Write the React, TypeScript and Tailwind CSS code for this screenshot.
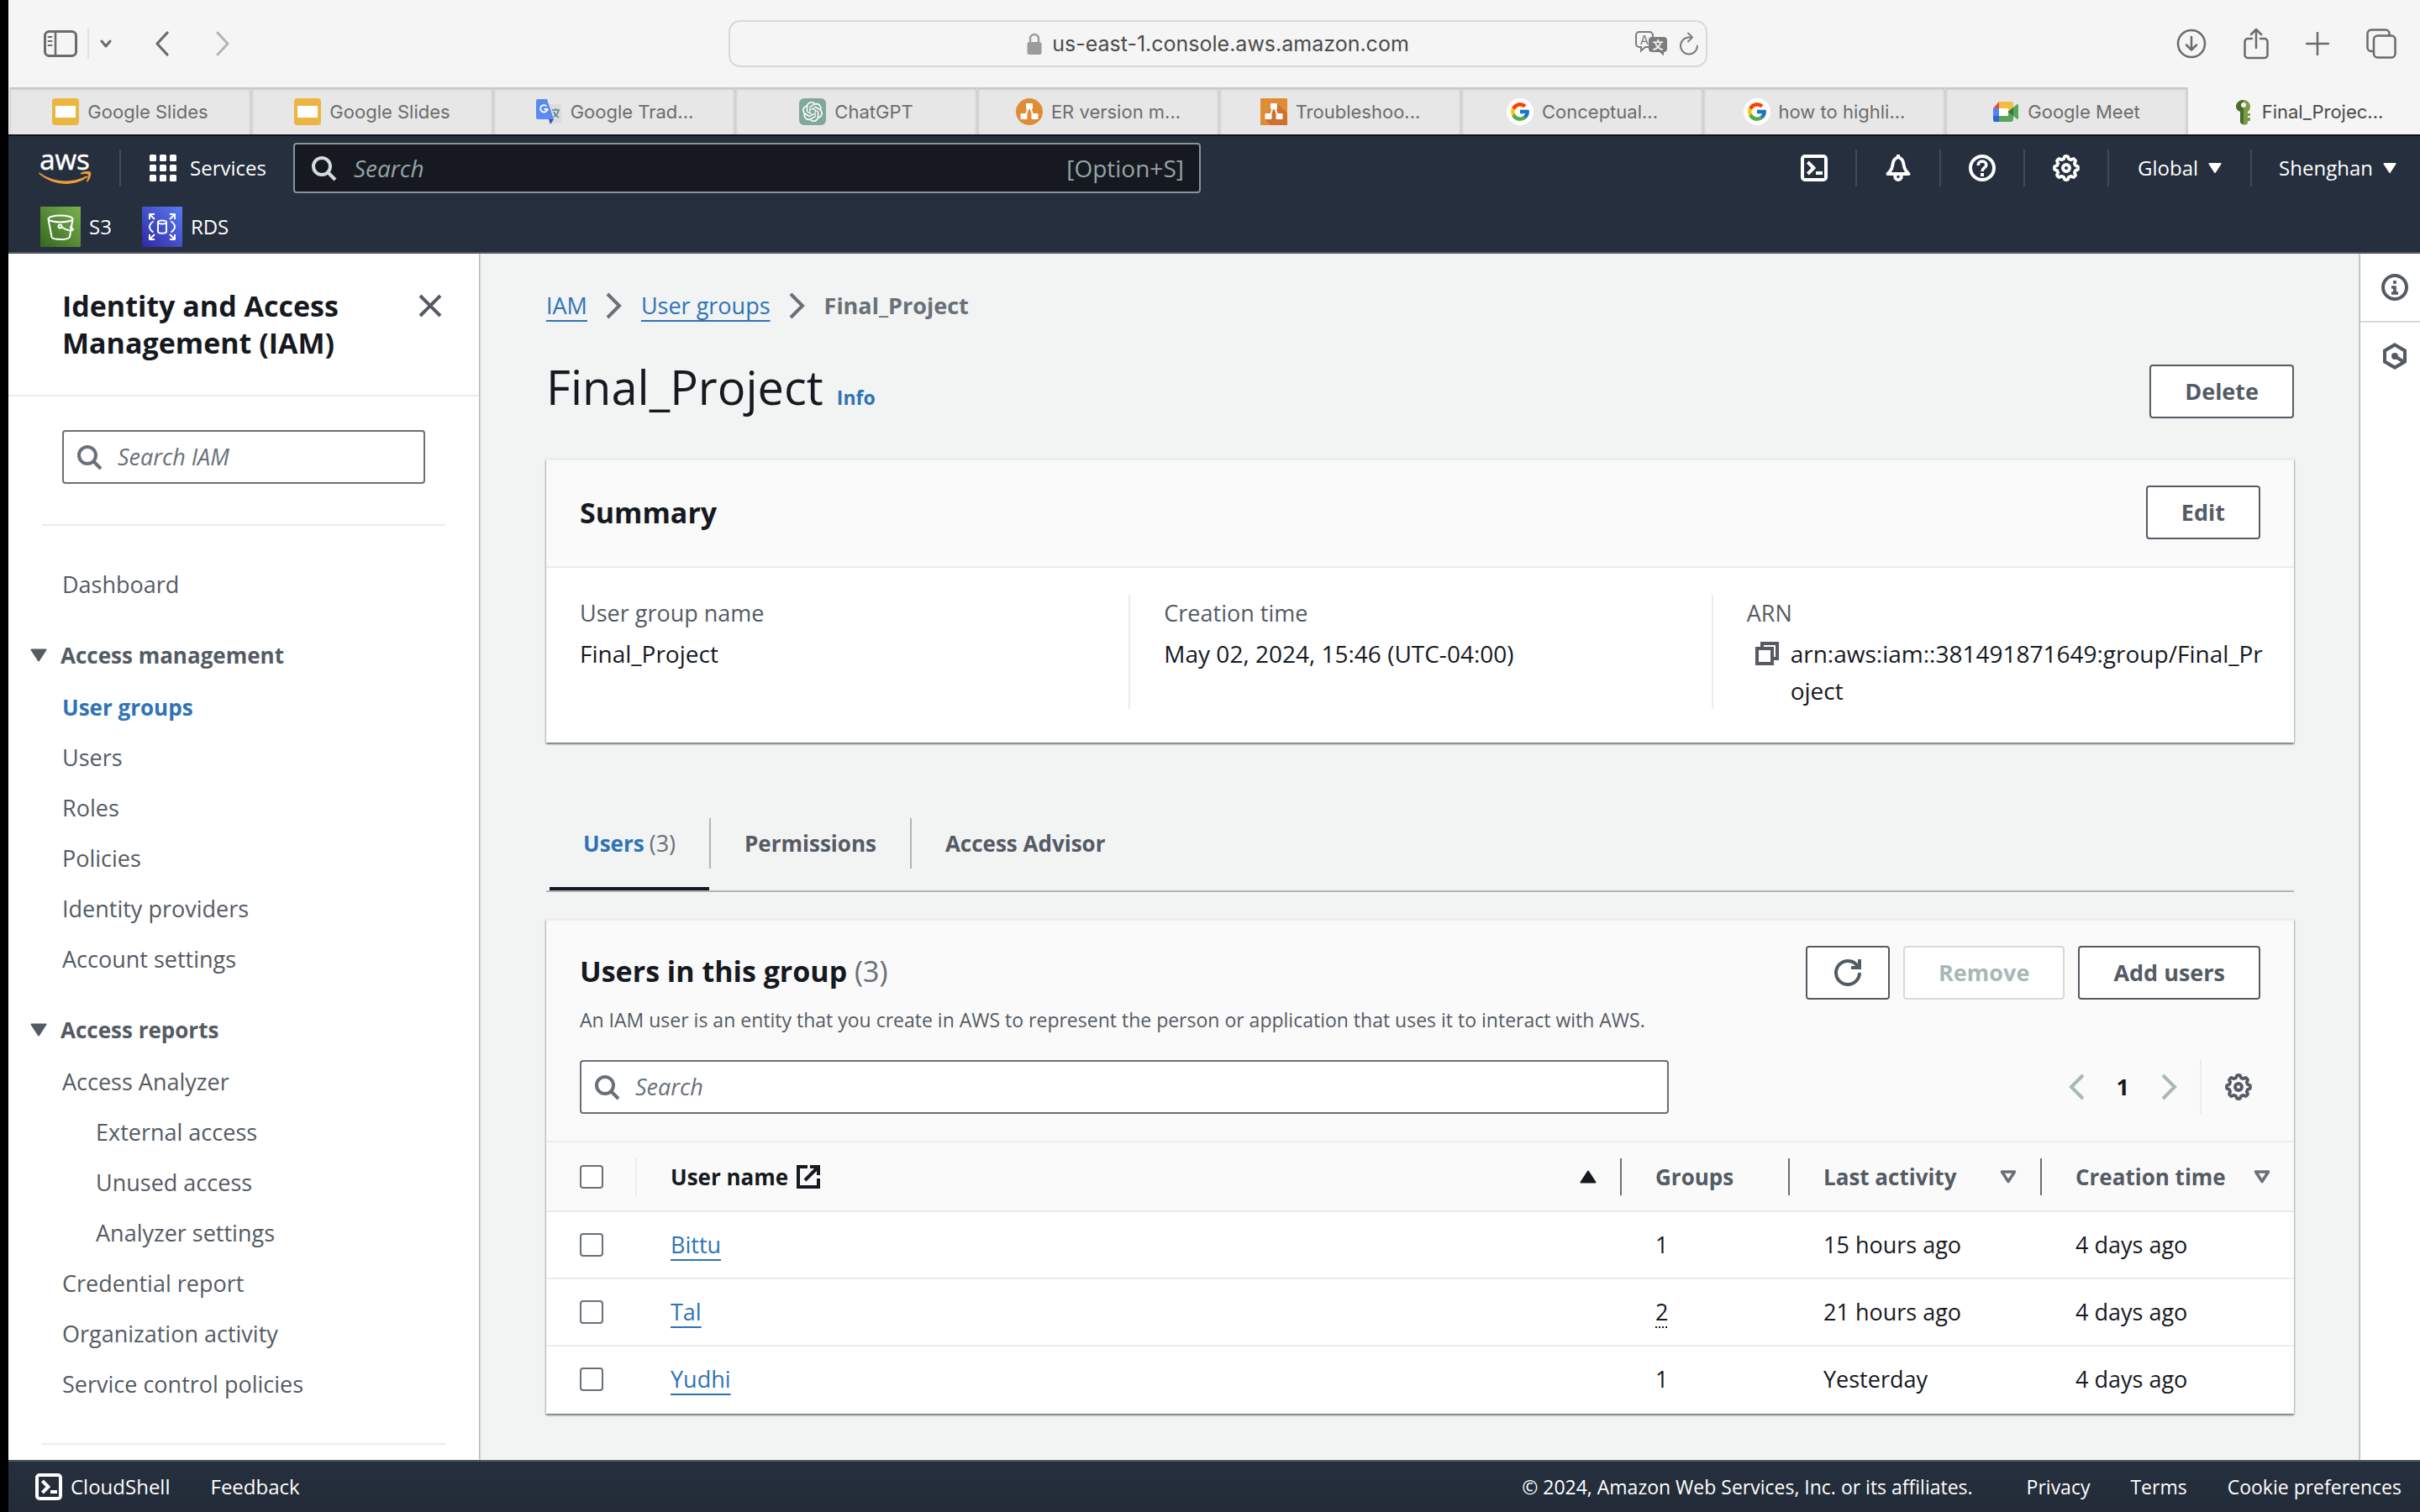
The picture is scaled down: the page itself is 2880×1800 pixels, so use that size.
import React from "react";
import { FcGoogle } from "react-icons/fc";
import { SiOpenai } from "react-icons/si";

type IconProps = { className?: string };

/* ---------- browser chrome icons ---------- */

const SidebarIcon = () => (
  <svg width="40" height="32" viewBox="0 0 40 32" fill="none" stroke="currentColor" strokeWidth="3">
    <rect x="1.5" y="1.5" width="37" height="29" rx="5" />
    <path d="M14 2v28" strokeWidth="2.5" />
    <path d="M5.500 8h4M5.500 13h4M5.500 18h4" strokeWidth="2" strokeLinecap="round" />
  </svg>
);

const Chevron = ({ d, w, h, sw, vb }: { d: string; w: number; h: number; sw: number; vb: string }) => (
  <svg width={w} height={h} viewBox={vb} fill="none" stroke="currentColor" strokeWidth={sw} strokeLinecap="round" strokeLinejoin="round">
    <path d={d} />
  </svg>
);

const LockIcon = () => (
  <svg width="18" height="26" viewBox="0 0 18 26" className="text-[#9b9b9b]">
    <rect x="0.500" y="11" width="17" height="15" rx="2.500" fill="currentColor" />
    <path d="M4 12V7a5 5 0 0 1 10 0v5" fill="none" stroke="currentColor" strokeWidth="2.400" />
  </svg>
);

const TranslateIcon = () => (
  <svg width="40" height="30" viewBox="0 0 40 30" className="text-[#7d7d7d]">
    <path d="M16 19h-4l-5 4.500V19H5a4 4 0 0 1-4-4V5a4 4 0 0 1 4-4h12a4 4 0 0 1 4 4v2" fill="none" stroke="currentColor" strokeWidth="2" />
    <text x="11" y="16" fontSize="15" textAnchor="middle" fill="currentColor" fontFamily="Inter, sans-serif">A</text>
    <path d="M20 7h14a4 4 0 0 1 4 4v10a4 4 0 0 1-4 4v4.500L29 25h-9a4 4 0 0 1-4-4V11a4 4 0 0 1 4-4z" fill="currentColor" />
    <text x="27" y="21" fontSize="13" fontWeight="700" textAnchor="middle" fill="#f5f5f5" fontFamily="'Noto Sans CJK SC', sans-serif">文</text>
  </svg>
);

const ReloadIcon = () => (
  <svg width="24" height="28" viewBox="0 0 24 28" fill="none" stroke="#7d7d7d" strokeWidth="2" strokeLinecap="round" strokeLinejoin="round">
    <path d="M22 16.500A10 10 0 1 1 12 6.500h3.500" />
    <path d="M11 1.500l5 5-5 5" />
  </svg>
);

const DownloadIcon = () => (
  <svg width="36" height="36" viewBox="0 0 36 36" fill="none" stroke="currentColor" strokeWidth="2.500" strokeLinecap="round" strokeLinejoin="round">
    <circle cx="18" cy="18" r="16" />
    <path d="M18 10v15M12 19.500l6 6 6-6" />
  </svg>
);

const ShareIcon = () => (
  <svg width="30" height="38" viewBox="0 0 30 38" fill="none" stroke="currentColor" strokeWidth="2.500" strokeLinecap="round" strokeLinejoin="round">
    <path d="M10 13H5a3.500 3.500 0 0 0-3.500 3.500v16A3.500 3.500 0 0 0 5 36h20a3.500 3.500 0 0 0 3.500-3.500v-16A3.500 3.500 0 0 0 25 13h-5" />
    <path d="M15 24V2M9 8l6-6 6 6" />
  </svg>
);

const PlusIcon = () => (
  <svg width="28" height="28" viewBox="0 0 28 28" stroke="currentColor" strokeWidth="2.500" strokeLinecap="round">
    <path d="M14 1v26M1 14h26" />
  </svg>
);

const TabsIcon = () => (
  <svg width="36" height="36" viewBox="0 0 36 36" fill="none" stroke="currentColor" strokeWidth="2.500">
    <path d="M8 27H6a4.500 4.500 0 0 1-4.500-4.500V6A4.500 4.500 0 0 1 6 1.500h17A4.500 4.500 0 0 1 27.500 6v2" />
    <rect x="9" y="8.500" width="25.500" height="26" rx="4.500" />
  </svg>
);

/* ---------- favicons ---------- */

const SlidesFav = () => (
  <svg width="32" height="32" viewBox="0 0 32 32">
    <rect width="32" height="32" rx="4" fill="#eab541" />
    <rect x="4" y="9" width="24" height="14" fill="#fff" />
  </svg>
);

const TranslateFav = () => (
  <svg width="32" height="32" viewBox="0 0 32 32">
    <path d="M14 7h15a2 2 0 0 1 2 2v19a2 2 0 0 1-2 2H18z" fill="#dcdcdc" />
    <path d="M16 25l6 0-4 6z" fill="#3452c4" />
    <path d="M3 1h11l8 24H3a2 2 0 0 1-2-2V3a2 2 0 0 1 2-2z" fill="#5a8bf0" />
    <path d="M13.500 9.500A4.200 4.200 0 1 0 14.500 13h-4" fill="none" stroke="#fff" strokeWidth="1.800" />
    <path d="M20 14h9M24.500 12v2M28 14c-1 4-4 7-6 8M22 16c1 3 3 5 6 7" stroke="#5f8391" strokeWidth="1.500" fill="none" />
  </svg>
);

const ChatFav = () => (
  <span className="flex size-8 items-center justify-center rounded-md bg-[#80a89b] text-2xl text-white">
    <SiOpenai />
  </span>
);

const DrawioShape = () => (
  <>
    <path d="M16 8l-5 14M16 8l5 14" stroke="#fff" strokeWidth="2" />
    <rect x="12" y="6" width="8" height="7" rx="1" fill="#fff" />
    <rect x="5.500" y="18" width="8" height="7" rx="1" fill="#fff" />
    <rect x="18.500" y="18" width="8" height="7" rx="1" fill="#fff" />
  </>
);

const DrawioRound = () => (
  <svg width="32" height="32" viewBox="0 0 32 32">
    <circle cx="16" cy="16" r="16" fill="#e08c35" />
    <DrawioShape />
  </svg>
);

const DrawioSquare = () => (
  <svg width="32" height="32" viewBox="0 0 32 32">
    <rect width="32" height="32" rx="1" fill="#e08c35" />
    <path d="M20 6l12 12v14H12l-6-7 6-12z" fill="#d0702c" />
    <DrawioShape />
  </svg>
);

const GoogleFav = () => (
  <span className="flex size-8 items-center justify-center rounded-full bg-white text-[26px]">
    <FcGoogle />
  </span>
);

const MeetFav = () => (
  <svg width="32" height="32" viewBox="0 0 32 32">
    <path d="M8 4v8H1z" fill="#dc4f3e" />
    <path d="M8 4h14a3 3 0 0 1 3 3v8l-6 3v-6H8z" fill="#f2bd42" />
    <path d="M1 12h7v9H1z" fill="#5383ec" />
    <path d="M1 21h7v7H3a2 2 0 0 1-2-2z" fill="#2f66d0" />
    <path d="M8 21h11v-6l6 2v8a3 3 0 0 1-3 3H8z" fill="#58a65c" />
    <path d="M8 12h11v9H8z" fill="#fff" />
    <path d="M19 16l10-8.500c1-.8 2-.3 2 1v15c0 1.300-1 1.800-2 1z" fill="#58a65c" />
    <path d="M19 16l6-5v10z" fill="#35753f" />
  </svg>
);

const KeyFav = () => (
  <svg width="24" height="32" viewBox="0 0 24 32">
    <path d="M12 2a8 8 0 0 1 8 8c0 2.500-1 4.500-3 6v2h3v3h-3v2h3v4h-3v3l-3 2-4-3V16c-3-1-5-3.500-5-6a8 8 0 0 1 7-8z" fill="#7b9c46" />
    <path d="M12 2C7 2 3 5.500 3 10c0 3 2 5 5 6v13l4 3V12" fill="#4c6b2b" />
    <circle cx="12" cy="8" r="3" fill="#f5f5f5" />
  </svg>
);

/* ---------- console icons, on a 16-unit grid ---------- */

const Svg = ({ className = "size-8", children }: IconProps & { children: React.ReactNode }) => (
  <svg viewBox="0 0 16 16" className={"shrink-0 " + className} fill="none" stroke="currentColor" strokeWidth="2">
    {children}
  </svg>
);

const SearchIcon = ({ className }: IconProps) => (
  <Svg className={className}>
    <circle cx="7" cy="7" r="5" />
    <path d="M10.500 10.500L15 15" />
  </Svg>
);

const gearPath = Array.from({ length: 96 }, (_, i) => {
  const a = (i / 96) * Math.PI * 2;
  const wave = Math.max(-1, Math.min(1, Math.cos(8 * a) * 1.8));
  const r = 6.300 + 0.700 * wave;
  return `${i ? "L" : "M"}${(8 + r * Math.sin(a)).toFixed(2)} ${(8 - r * Math.cos(a)).toFixed(2)}`;
}).join("") + "Z";

const GearIcon = ({ className }: IconProps) => (
  <Svg className={className}>
    <path d={gearPath} strokeLinejoin="round" strokeWidth="1.900" />
    <circle cx="8" cy="8" r="2" />
  </Svg>
);

const TerminalIcon = () => (
  <Svg>
    <rect x="1" y="1" width="14" height="14" rx="1.500" />
    <path d="M4.200 4.500L7.700 8l-3.500 3.500" />
    <path d="M9 11h4" />
  </Svg>
);

const BellIcon = () => (
  <Svg>
    <path d="M8 1.500c-1.800.5-3 2-3.300 4.500-.3 2.500-1.200 4-3 5.500h12.600c-1.800-1.500-2.700-3-3-5.500C11 3.500 9.800 2 8 1.500z" strokeLinejoin="round" strokeWidth="1.900" />
    <path d="M6.200 12v1.200a1.800 1.800 0 0 0 3.600 0V12" />
    <path d="M8 0v2" />
  </Svg>
);

const HelpIcon = () => (
  <Svg>
    <circle cx="8" cy="8" r="7" />
    <path d="M5.600 6.500C5.600 5 6.600 4 8 4s2.400.9 2.400 2.200C10.400 7.800 8 8 8 10" strokeWidth="1.800" />
    <path d="M8 11v2" />
  </Svg>
);

const InfoIcon = () => (
  <Svg>
    <circle cx="8" cy="8" r="7" />
    <path d="M6 8h2v3.500M6 11.500h4M8 4v2" strokeWidth="1.800" />
  </Svg>
);

const HexIcon = () => (
  <Svg>
    <path d="M8 1.200l6 3.500v6.600l-6 3.500-6-3.500V4.700z" />
    <circle cx="8" cy="8" r="2" fill="currentColor" stroke="none" />
    <path d="M8 8l5.500 3.500" />
  </Svg>
);

const CloseIcon = () => (
  <Svg>
    <path d="M2 2l12 12M14 2L2 14" />
  </Svg>
);

const RefreshIcon = () => (
  <Svg>
    <path d="M10 5h5V0M15 8a7 7 0 1 1-7-7 6.900 6.900 0 0 1 6.300 4" />
  </Svg>
);

const CopyIcon = () => (
  <Svg>
    <path d="M2 5h9v9H2z" />
    <path d="M5 5V2h9v9h-3" />
  </Svg>
);

const ExternalIcon = () => (
  <Svg>
    <path d="M7.500 2H2v12h12V9M9 2h5v5M14 2l-8 8" />
  </Svg>
);

const AngleIcon = ({ flip, className }: IconProps & { flip?: boolean }) => (
  <Svg className={className}>
    <path d={flip ? "M12 1L5 8l7 7" : "M4 1l7 7-7 7"} />
  </Svg>
);

const CaretDown = ({ className = "h-4 w-5" }: IconProps) => (
  <svg viewBox="0 0 20 16" className={"shrink-0 " + className} fill="currentColor" stroke="currentColor" strokeWidth="2" strokeLinejoin="round">
    <path d="M1.500 1.500h17L10 14.500z" />
  </svg>
);

const SortUp = () => (
  <svg width="20" height="16" viewBox="0 0 20 16" fill="currentColor" stroke="currentColor" strokeWidth="2" strokeLinejoin="round">
    <path d="M1.500 14.500h17L10 1.500z" />
  </svg>
);

const SortNone = () => (
  <svg width="20" height="16" viewBox="0 0 20 16" fill="none" stroke="#687078" strokeWidth="3.500" strokeLinejoin="round">
    <path d="M2.500 2h15L10 13.500z" />
  </svg>
);

const GridIcon = () => (
  <svg width="32" height="32" viewBox="0 0 32 32" fill="currentColor">
    {[0, 12, 24].map((y) => [0, 12, 24].map((x) => <rect key={x + "-" + y} x={x} y={y} width="8" height="8" rx="1.500" />))}
  </svg>
);

const AwsLogo = () => (
  <svg width="64" height="60" viewBox="0 -8 64 60" className="overflow-visible" role="img" aria-label="AWS">
    <text x="31" y="24" textAnchor="middle" fontSize="33" fill="#fff" stroke="#fff" strokeWidth="0.500" fontFamily="'Open Sans', sans-serif">aws</text>
    <path d="M1 27.500c17 12 38 13 56 4 1.200-.4 2 .8 1 1.600C42 45 17 43 .6 29c-.8-1 0-2 .4-1.500z" fill="#ee9b3c" />
    <path d="M50 28c4-2.500 11-2.500 12-1 1 1.500-.5 8.500-4 11.500-.6.500-1.300.2-1-.5 1-2.500 2.500-7 1.600-8.200-1-1.100-5.500-.6-8-.3-.8 0-1.100-.9-.6-1.500z" fill="#ee9b3c" />
  </svg>
);

const S3Icon = () => (
  <svg width="48" height="48" viewBox="0 0 48 48">
    <defs>
      <linearGradient id="s3" x1="0" y1="1" x2="1" y2="0">
        <stop offset="0" stopColor="#33681f" />
        <stop offset="1" stopColor="#7cb04f" />
      </linearGradient>
    </defs>
    <rect width="48" height="48" fill="url(#s3)" />
    <g fill="none" stroke="#fff" strokeWidth="2" strokeLinejoin="round">
      <ellipse cx="24" cy="14.500" rx="14.500" ry="4" />
      <path d="M9.500 15l4 21c1 4 20 4 21.500 0l3.500-21" />
      <circle cx="23.500" cy="23.500" r="2" />
      <path d="M25.500 24.500c4 2.500 9 4.500 13 3.500 1.500-1-1.500-3-3.500-4" />
    </g>
  </svg>
);

const RdsIcon = () => (
  <svg width="48" height="48" viewBox="0 0 48 48">
    <defs>
      <linearGradient id="rds" x1="0" y1="1" x2="1" y2="0">
        <stop offset="0" stopColor="#2f27a5" />
        <stop offset="1" stopColor="#5a7cf2" />
      </linearGradient>
    </defs>
    <rect width="48" height="48" fill="url(#rds)" />
    <g fill="none" stroke="#fff" strokeWidth="2" strokeLinejoin="round">
      <path d="M9 15V9h6M9 9l6 6M33 9h6v6M39 9l-6 6M9 33v6h6M9 39l6-6M39 33v6h-6M39 39l-6-6" />
      <path d="M13.500 17.500c-6 4-6 9 0 13M34.500 17.500c6 4 6 9 0 13" />
      <ellipse cx="24" cy="18.500" rx="5" ry="2" />
      <path d="M19 18.500v11c0 3 10 3 10 0v-11" />
    </g>
  </svg>
);

/* ---------- browser chrome ---------- */

function Toolbar() {
  return (
    <div className="flex h-26 shrink-0 items-center justify-between bg-[#f5f5f5] pr-7 pl-[42px] text-[#6b6b6b]">
      <div className="flex items-center">
        <button aria-label="Show sidebar"><SidebarIcon /></button>
        <span className="ml-3 h-9 w-0.5 bg-[#e2e2e2]" />
        <button aria-label="Sidebar menu" className="ml-3"><Chevron d="M2 2l5 6 5-6" w={16} h={10} sw={3} vb="-1 0 16 10" /></button>
        <button aria-label="Back" className="ml-[50px]"><Chevron d="M15 2L3 15l12 13" w={18} h={30} sw={3.200} vb="0 0 18 30" /></button>
        <button aria-label="Forward" className="ml-[54px] text-[#b4b4b4]"><Chevron d="M3 2l12 13L3 28" w={18} h={30} sw={3} vb="0 0 18 30" /></button>
      </div>
      <div className="ml-auto flex h-14 w-[1165px] shrink items-center rounded-[14px] border-2 border-[#d8d8d8] pr-2 pl-3">
        <span className="w-20" />
        <div className="flex flex-1 items-center justify-center gap-3">
          <LockIcon />
          <span className="text-[25px] leading-9 text-[#4b4b4b]">us-east-1.console.aws.amazon.com</span>
        </div>
        <div className="flex w-21 items-center justify-end gap-3">
          <button aria-label="Translate"><TranslateIcon /></button>
          <button aria-label="Reload"><ReloadIcon /></button>
        </div>
      </div>
      <div className="ml-[558px] flex items-center gap-11">
        <button aria-label="Downloads"><DownloadIcon /></button>
        <button aria-label="Share"><ShareIcon /></button>
        <button aria-label="New tab"><PlusIcon /></button>
        <button aria-label="Tab overview"><TabsIcon /></button>
      </div>
    </div>
  );
}

const browserTabs: { icon: React.ReactNode; title: string }[] = [
  { icon: <SlidesFav />, title: "Google Slides" },
  { icon: <SlidesFav />, title: "Google Slides" },
  { icon: <TranslateFav />, title: "Google Trad..." },
  { icon: <ChatFav />, title: "ChatGPT" },
  { icon: <DrawioRound />, title: "ER version m..." },
  { icon: <DrawioSquare />, title: "Troubleshoo..." },
  { icon: <GoogleFav />, title: "Conceptual..." },
  { icon: <GoogleFav />, title: "how to highli..." },
  { icon: <MeetFav />, title: "Google Meet" },
  { icon: <KeyFav />, title: "Final_Projec..." },
];

function BrowserTabs() {
  return (
    <div className="flex h-14 shrink-0 overflow-hidden">
      {browserTabs.map((t, i) => {
        const active = i === browserTabs.length - 1;
        return (
          <button
            key={i}
            className={
              "flex w-72 shrink-0 items-center justify-center gap-2.5 border-l-2 pt-0.5 text-[22px] " +
              (i === 0 ? "border-transparent " : "border-[#d2d2d2] ") +
              (active
                ? "bg-[#f5f5f5] text-[#4a4a4a]"
                : "bg-[#e7e7e7] text-[#6c6c6c] shadow-[inset_0_2px_3px_rgba(0,0,0,0.18)]")
            }
          >
            {t.icon}
            {t.title}
          </button>
        );
      })}
    </div>
  );
}

/* ---------- console header ---------- */

function NavItem({ label, children }: { label: string; children: React.ReactNode }) {
  return (
    <div className="flex h-11 items-center border-r-2 border-[#414a56] px-[33px]">
      <button aria-label={label} className="block">{children}</button>
    </div>
  );
}

function ConsoleHeader() {
  return (
    <header className="shrink-0 border-t-2 border-b-2 border-t-[#0b131e] border-b-[#545b64] bg-[#262f3e] text-[24px] font-medium text-white">
      <div className="flex items-center pt-2 pl-9">
        <a href="#home" aria-label="AWS home"><AwsLogo /></a>
        <span className="ml-8 h-11 w-0.5 bg-[#414a56]" />
        <button className="ml-[34px] flex items-center gap-4"><GridIcon />Services</button>
        <label className="ml-8 flex h-15 w-[1080px] items-center gap-5 rounded-sm border-2 border-[#879596] bg-[#16191f] px-4.5 text-[28px] font-normal">
          <SearchIcon className="size-8 text-[#d5dbdb]" />
          <input aria-label="Search services" placeholder="Search" className="min-w-0 flex-1 bg-transparent italic outline-none placeholder:text-[#95a5a6]" />
          <span className="text-[#95a5a6]">[Option+S]</span>
        </label>
        <div className="ml-auto flex items-center">
          <NavItem label="CloudShell"><TerminalIcon /></NavItem>
          <NavItem label="Notifications"><BellIcon /></NavItem>
          <NavItem label="Help"><HelpIcon /></NavItem>
          <NavItem label="Settings"><GearIcon /></NavItem>
          <div className="flex h-11 items-center border-r-2 border-[#414a56] px-[34px]">
            <button className="flex items-center gap-3">Global<CaretDown className="h-3.5 w-4" /></button>
          </div>
          <button className="flex items-center gap-3 pr-7 pl-8">Shenghan<CaretDown className="h-3.5 w-4" /></button>
        </div>
      </div>
      <nav className="flex gap-9 px-[38px] pt-4 pb-1.5">
        <a href="#s3" className="flex items-center gap-2.5"><S3Icon />S3</a>
        <a href="#rds" className="flex items-center gap-2.5"><RdsIcon />RDS</a>
      </nav>
    </header>
  );
}

/* ---------- side navigation ---------- */

type NavLink = { text: string; sub?: boolean; active?: boolean };
const sections: { title: string; links: NavLink[] }[] = [
  {
    title: "Access management",
    links: [
      { text: "User groups", active: true },
      { text: "Users" },
      { text: "Roles" },
      { text: "Policies" },
      { text: "Identity providers" },
      { text: "Account settings" },
    ],
  },
  {
    title: "Access reports",
    links: [
      { text: "Access Analyzer" },
      { text: "External access", sub: true },
      { text: "Unused access", sub: true },
      { text: "Analyzer settings", sub: true },
      { text: "Credential report" },
      { text: "Organization activity" },
      { text: "Service control policies" },
    ],
  },
];

function SideNav() {
  return (
    <aside className="z-10 w-[560px] shrink-0 overflow-hidden bg-white text-[#545b64] shadow-[1px_0_2px_rgba(0,28,36,0.4)]">
      <div className="flex items-start justify-between border-b-2 border-[#eaeded] py-10 pr-[42px] pl-16">
        <h2 className="w-[350px] text-[34px] leading-11 font-bold text-[#16191f]">Identity and Access Management (IAM)</h2>
        <button aria-label="Close navigation" className="mt-1.5"><CloseIcon /></button>
      </div>
      <label className="mx-16 mt-10 flex h-16 items-center gap-4.5 rounded-sm border-2 border-[#687078] px-3.5 text-[#687078]">
        <SearchIcon />
        <input aria-label="Search IAM" placeholder="Search IAM" className="w-full min-w-0 italic outline-none placeholder:text-[#687078]" />
      </label>
      <hr className="mx-10 mt-12 border-t-2 border-[#eaeded]" />
      <a href="#dashboard" className="mt-12 ml-16 block">Dashboard</a>
      {sections.map((s) => (
        <section key={s.title} className="mt-10">
          <button className="ml-[26px] flex items-center gap-4 text-[26px] font-bold"><CaretDown />{s.title}</button>
          <ul className="mt-4.5 flex flex-col gap-4">
            {s.links.map((l) => (
              <li key={l.text} className={"h-11 " + (l.sub ? "pl-[104px]" : "pl-16")}>
                <a href={"#" + l.text} className={l.active ? "text-[26px] font-bold text-[#2e73b8]" : ""}>{l.text}</a>
              </li>
            ))}
          </ul>
        </section>
      ))}
      <hr className="mx-10 mt-12 border-t-2 border-[#eaeded]" />
    </aside>
  );
}

/* ---------- main content ---------- */

function Button({ children, disabled, label, className = "px-10" }: { children: React.ReactNode; disabled?: boolean; label?: string; className?: string }) {
  return (
    <button
      aria-label={label}
      disabled={disabled}
      className={
        "flex h-16 items-center justify-center rounded-sm border-2 bg-white font-bold " +
        (disabled ? "border-[#d5dbdb] text-[#aab7b8] " : "border-[#545b64] text-[#545b64] ") +
        className
      }
    >
      {children}
    </button>
  );
}

const link = "text-[#2e73b8] underline decoration-2 underline-offset-[7px]";
const card = "border-t-2 border-[#eaeded] bg-white shadow-[0_2px_2px_rgba(0,28,36,0.45),1px_1px_2px_rgba(0,28,36,0.15),-1px_1px_2px_rgba(0,28,36,0.15)]";

function Summary() {
  return (
    <section className={"mt-12 " + card}>
      <div className="flex items-center justify-between border-b-2 border-[#eaeded] bg-[#fafafa] px-10 pt-7.5 pb-8">
        <h2 className="text-[34px] leading-15 font-bold">Summary</h2>
        <Button>Edit</Button>
      </div>
      <dl className="grid grid-cols-3 gap-x-20 px-10 pt-8 pb-10">
        <div className="flex flex-col gap-1">
          <dt className="text-[#545b64]">User group name</dt>
          <dd className="text-[28px]">Final_Project</dd>
        </div>
        <div className="-ml-10 flex flex-col gap-1 border-l-2 border-[#eaeded] pl-10">
          <dt className="text-[#545b64]">Creation time</dt>
          <dd className="text-[28px]">May 02, 2024, 15:46 (UTC-04:00)</dd>
        </div>
        <div className="-mr-3 -ml-10 flex flex-col gap-1 border-l-2 border-[#eaeded] pl-10">
          <dt className="text-[#545b64]">ARN</dt>
          <dd className="flex items-start gap-3 pl-2 text-[28px] break-all">
            <button aria-label="Copy ARN" className="mt-1.5 text-[#545b64]"><CopyIcon /></button>
            <span>arn:aws:iam::381491871649:group/Final_Project</span>
          </dd>
        </div>
      </dl>
    </section>
  );
}

function Tabs() {
  const inner = "flex h-15 items-center gap-1.5 px-10 ";
  return (
    <div role="tablist" className="mt-22.5 flex border-b-2 border-[#aab7b8] pl-1 text-[26px] font-bold text-[#545b64]">
      <button role="tab" aria-selected="true" className="border-b-4 border-[#16191f] pb-5.5">
        <span className={inner + "text-[#2e73b8]"}>Users <span className="text-[27px] font-normal text-[#687078]">(3)</span></span>
      </button>
      <button role="tab" aria-selected="false" className="border-b-4 border-transparent pb-5.5">
        <span className={inner + "border-x-2 border-[#aab7b8]"}>Permissions</span>
      </button>
      <button role="tab" aria-selected="false" className="border-b-4 border-transparent pb-5.5">
        <span className={inner}>Access Advisor</span>
      </button>
    </div>
  );
}

const Check = ({ label }: { label: string }) => (
  <input type="checkbox" aria-label={label} className="ml-10 block size-7 appearance-none rounded-sm border-2 border-[#687078] bg-white" />
);

const rows = [
  { name: "Bittu", groups: 1, last: "15 hours ago", created: "4 days ago" },
  { name: "Tal", groups: 2, last: "21 hours ago", created: "4 days ago" },
  { name: "Yudhi", groups: 1, last: "Yesterday", created: "4 days ago" },
];

function UsersCard() {
  const head = "flex h-11 items-center justify-between pl-10 pr-7 ";
  return (
    <section className={"mt-8 " + card}>
      <div className="border-b-2 border-[#eaeded] bg-[#fafafa] px-10 pt-7.5 pb-8">
        <div className="flex items-start justify-between">
          <h2 className="text-[34px] leading-15 font-bold">
            Users in this group <span className="font-normal text-[#687078]">(3)</span>
          </h2>
          <div className="flex gap-4">
            <Button label="Refresh" className="px-8"><RefreshIcon /></Button>
            <Button disabled>Remove</Button>
            <Button>Add users</Button>
          </div>
        </div>
        <p className="mt-1 text-[23px] leading-10 text-[#545b64]">
          An IAM user is an entity that you create in AWS to represent the person or application that uses it to interact with AWS.
        </p>
        <div className="mt-7 flex items-center justify-between">
          <label className="flex h-16 w-[1296px] shrink items-center gap-4.5 rounded-sm border-2 border-[#687078] bg-white px-3.5 text-[#687078]">
            <SearchIcon />
            <input aria-label="Search users" placeholder="Search" className="w-full min-w-0 italic outline-none placeholder:text-[#687078]" />
          </label>
          <div className="flex items-center">
            <button aria-label="Previous page" disabled className="text-[#aab7b8]"><AngleIcon flip /></button>
            <button aria-label="Page 1" className="px-8 font-bold">1</button>
            <button aria-label="Next page" disabled className="text-[#aab7b8]"><AngleIcon /></button>
            <span className="ml-5 h-16 w-0.5 bg-[#eaeded]" />
            <button aria-label="Preferences" className="mr-2.5 ml-7 text-[#545b64]"><GearIcon /></button>
          </div>
        </div>
      </div>
      <table className="w-full table-fixed text-left">
        <colgroup>
          <col className="w-[108px]" />
          <col />
          <col className="w-[200px]" />
          <col className="w-[300px]" />
          <col className="w-[300px]" />
        </colgroup>
        <thead>
          <tr className="h-[82px] border-b-2 border-[#eaeded] bg-[#fafafa] text-[26px] text-[#545b64]">
            <th scope="col"><div className="flex h-11 items-center border-r-2 border-[#eaeded]"><Check label="Select all users" /></div></th>
            <th scope="col">
              <div className={head + "border-r-2 border-[#687078] text-[#16191f]"}>
                <span className="flex items-center gap-2">User name <ExternalIcon /></span>
                <SortUp />
              </div>
            </th>
            <th scope="col"><div className={head + "border-r-2 border-[#687078]"}>Groups</div></th>
            <th scope="col"><div className={head + "border-r-2 border-[#687078]"}>Last activity<SortNone /></div></th>
            <th scope="col"><div className={head}>Creation time<SortNone /></div></th>
          </tr>
        </thead>
        <tbody>
          {rows.map((r) => (
            <tr key={r.name} className="h-20 border-b-2 border-[#eaeded] last:border-transparent">
              <td><Check label={"Select " + r.name} /></td>
              <td className="pl-10"><a href={"#" + r.name} className={link}>{r.name}</a></td>
              <td className="pl-10">
                <span className={r.groups > 1 ? "underline decoration-dotted decoration-2 underline-offset-[7px]" : ""}>{r.groups}</span>
              </td>
              <td className="pl-10">{r.last}</td>
              <td className="pl-10">{r.created}</td>
            </tr>
          ))}
        </tbody>
      </table>
    </section>
  );
}

function Footer() {
  return (
    <footer className="flex h-[62px] shrink-0 items-center border-t-2 border-[#545b64] bg-linear-to-b from-[#262f3e] to-[#222b37] pr-[22px] pl-8 text-[24px] text-white">
      <button className="flex items-center gap-2.5"><TerminalIcon />CloudShell</button>
      <a href="#feedback" className="ml-12">Feedback</a>
      <div className="ml-auto flex items-center gap-12 text-[23px]">
        <span className="mr-4">© 2024, Amazon Web Services, Inc. or its affiliates.</span>
        <a href="#privacy">Privacy</a>
        <a href="#terms">Terms</a>
        <button>Cookie preferences</button>
      </div>
    </footer>
  );
}

export default function App() {
  return (
    <div className="flex h-screen flex-col overflow-hidden border-l-[10px] border-black bg-[#f2f3f3]">
      <div className="font-[Inter,sans-serif]">
        <Toolbar />
        <BrowserTabs />
      </div>
      <div className="flex min-h-0 flex-1 flex-col font-['Open_Sans',sans-serif]">
        <ConsoleHeader />
        <div className="flex min-h-0 flex-1 text-[27px] leading-11 text-[#16191f]">
          <SideNav />
          <main className="min-w-0 flex-1 overflow-hidden pt-10 pr-[79px] pl-20">
            <nav aria-label="Breadcrumb" className="flex items-center gap-4 text-[#687078]">
              <a href="#iam" className={link}>IAM</a>
              <AngleIcon />
              <a href="#groups" className={link}>User groups</a>
              <AngleIcon />
              <span className="font-bold">Final_Project</span>
            </nav>
            <div className="mt-9.5 flex items-end justify-between">
              <h1 className="flex items-baseline gap-4 pb-0.5 text-[56px] leading-18">
                Final_Project
                <a href="#info" className="text-[23px] leading-8 font-bold text-[#2e73b8]">Info</a>
              </h1>
              <Button>Delete</Button>
            </div>
            <Summary />
            <Tabs />
            <UsersCard />
          </main>
          <aside className="w-[71px] shrink-0 bg-white text-[#545b64] shadow-[-1px_0_2px_rgba(0,28,36,0.4)]">
            <button aria-label="Info panel" className="flex h-[82px] w-full items-center border-b-2 border-[#d5dbdb] pl-[25px]"><InfoIcon /></button>
            <button aria-label="Tutorials" className="flex h-20 w-full items-center pl-[25px]"><HexIcon /></button>
          </aside>
        </div>
        <Footer />
      </div>
    </div>
  );
}
